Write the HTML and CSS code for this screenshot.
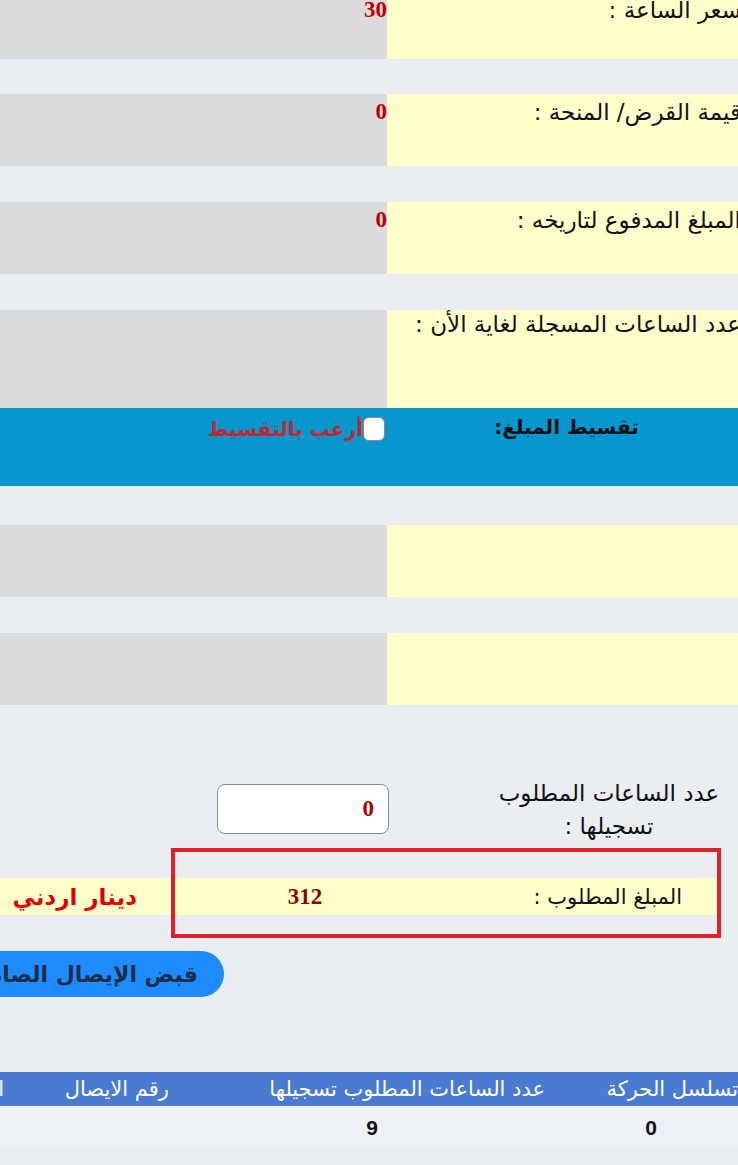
FILE: index.html
```html
<!DOCTYPE html>
<html lang="ar" dir="rtl">
<head>
    <meta charset="UTF-8">
    <meta name="viewport" content="width=device-width, initial-scale=1.0">
    <title>تسجيل الساعات</title>
    <link rel="stylesheet" href="styles.css">
</head>
<body>
    <div class="page">
        <div class="form-row first">
            <div class="label-cell">سعر الساعة :</div>
            <div class="value-cell">30</div>
        </div>
        <div class="form-row">
            <div class="label-cell">قيمة القرض/ المنحة :</div>
            <div class="value-cell">0</div>
        </div>
        <div class="form-row">
            <div class="label-cell">المبلغ المدفوع لتاريخه :</div>
            <div class="value-cell">0</div>
        </div>
        <div class="form-row tall">
            <div class="label-cell">عدد الساعات المسجلة لغاية الأن :</div>
            <div class="value-cell"></div>
        </div>

        <div class="install-row">
            <div class="install-label">تقسيط المبلغ:</div>
            <div class="install-value">
                <label class="install-check"><input type="checkbox"><span>أرغب بالتقسيط</span></label>
            </div>
        </div>

        <div class="form-row">
            <div class="label-cell"></div>
            <div class="value-cell"></div>
        </div>
        <div class="form-row">
            <div class="label-cell"></div>
            <div class="value-cell"></div>
        </div>

        <div class="hours-row">
            <div class="hours-label">عدد الساعات المطلوب تسجيلها :</div>
            <div class="hours-input"><input type="text" value="0"></div>
        </div>

        <div class="amount-row">
            <div class="amount-label">المبلغ المطلوب :</div>
            <div class="amount-value">312</div>
            <div class="amount-currency">دينار اردني</div>
            <div class="highlight"></div>
        </div>

        <div class="actions">
            <button class="receipt-btn">قبض الإيصال الصادر</button>
        </div>

        <table class="moves">
            <thead>
                <tr>
                    <th class="col-seq">تسلسل الحركة</th>
                    <th class="col-hours">عدد الساعات المطلوب تسجيلها</th>
                    <th class="col-receipt">رقم الايصال</th>
                    <th class="col-date">التاريخ</th>
                </tr>
            </thead>
            <tbody>
                <tr>
                    <td>0</td>
                    <td>9</td>
                    <td></td>
                    <td></td>
                </tr>
            </tbody>
        </table>
    </div>
</body>
</html>
```

FILE: styles.css
```css
html, body {
    margin: 0;
    padding: 0;
    background-color: #eaedf2;
}

body {
    font-family: "DejaVu Sans", sans-serif;
    color: #111;
    overflow: hidden;
}

.page {
    direction: rtl;
    width: 1000px;
    margin-right: -8px;
    margin-top: -8px;
}

/* label / value rows */
.form-row {
    display: flex;
    height: 72px;
    margin-bottom: 36px;
}

.form-row.first {
    height: 67px;
    margin-bottom: 35px;
}

.form-row.tall {
    height: 98px;
    margin-bottom: 0;
}

.label-cell {
    width: 359px;
    box-sizing: border-box;
    padding-right: 5px;
    flex-shrink: 0;
    background-color: #ffffcc;
    font-size: 23px;
    line-height: 36px;
    white-space: nowrap;
}

.value-cell {
    flex: 1;
    background-color: #dcdcdc;
    text-align: right;
    font-family: "Liberation Serif", serif;
    font-weight: bold;
    font-size: 23px;
    line-height: 36px;
    color: #c00000;
}

.tall .label-cell {
    line-height: 28px;
}

/* installment band */
.install-row {
    display: flex;
    height: 78px;
    background-color: #0796ce;
    margin-bottom: 39px;
}

.install-label {
    width: 359px;
    flex-shrink: 0;
    text-align: center;
    font-weight: bold;
    font-size: 20px;
    line-height: 38px;
}

.install-value {
    flex: 1;
    padding-right: 2px;
    padding-top: 9px;
}

.install-check {
    display: flex;
    align-items: center;
    font-weight: bold;
    font-size: 20px;
    color: #c1272d;
}

.install-check input {
    appearance: none;
    width: 22px;
    height: 24px;
    margin: 0;
    background: #fff;
    border: 1px solid #8a8a8a;
    border-radius: 6px;
}

/* hours to register */
.hours-row {
    display: flex;
    align-items: flex-start;
    margin-top: 72px;
    padding-right: 17px;
}

.hours-label {
    width: 240px;
    text-align: center;
    font-size: 23px;
    line-height: 33px;
}

.hours-input {
    padding-top: 7px;
    padding-right: 100px;
}

.hours-input input {
    width: 172px;
    height: 50px;
    box-sizing: border-box;
    border: 1px solid #8a8a8a;
    border-radius: 8px;
    background: #fff;
    text-align: right;
    padding: 0 14px;
    font-family: "Liberation Serif", serif;
    font-weight: bold;
    font-size: 23px;
    color: #b00000;
}

/* required amount */
.amount-row {
    position: relative;
    display: flex;
    align-items: center;
    width: 900px;
    height: 37px;
    margin-top: 35px;
    margin-right: 26px;
    background-color: #ffffcc;
}

.amount-label {
    width: 222px;
    padding-right: 38px;
    font-size: 21px;
}

.amount-value {
    width: 310px;
    text-align: center;
    font-family: "Liberation Serif", serif;
    font-weight: bold;
    font-size: 23px;
    color: #8b0000;
}

.amount-currency {
    padding-right: 13px;
    font-weight: bold;
    font-size: 23px;
    color: #e00000;
}

.highlight {
    position: absolute;
    top: -30px;
    right: -1px;
    width: 550px;
    height: 90px;
    box-sizing: border-box;
    border: 4px solid #e21f26;
}

/* receipt button */
.actions {
    margin-top: 36px;
    padding-right: 522px;
}

.receipt-btn {
    height: 46px;
    padding: 0 26px;
    border: none;
    border-radius: 23px;
    background-color: #1e8cff;
    color: #1c2d47;
    font-family: "DejaVu Sans", sans-serif;
    font-weight: bold;
    font-size: 22px;
    white-space: nowrap;
}

/* movements table */
.moves {
    margin-top: 75px;
    margin-right: -12px;
    border-collapse: collapse;
}

.moves th {
    height: 34px;
    padding: 0 15px 0 0;
    background-color: #4a7bd0;
    color: #fff;
    font-weight: normal;
    font-size: 21px;
    text-align: right;
    white-space: nowrap;
}

.moves th.col-seq {
    padding-right: 20px;
}

.moves td {
    height: 43px;
    padding: 0;
    background-color: #eef1f6;
    text-align: center;
    font-family: "Liberation Sans", sans-serif;
    font-weight: bold;
    font-size: 21px;
}

.moves td:first-child {
    padding-right: 16px;
}

.col-seq { width: 178px; }
.col-hours { width: 361px; }
.col-receipt { width: 150px; }
.col-date { width: 185px; }
```
